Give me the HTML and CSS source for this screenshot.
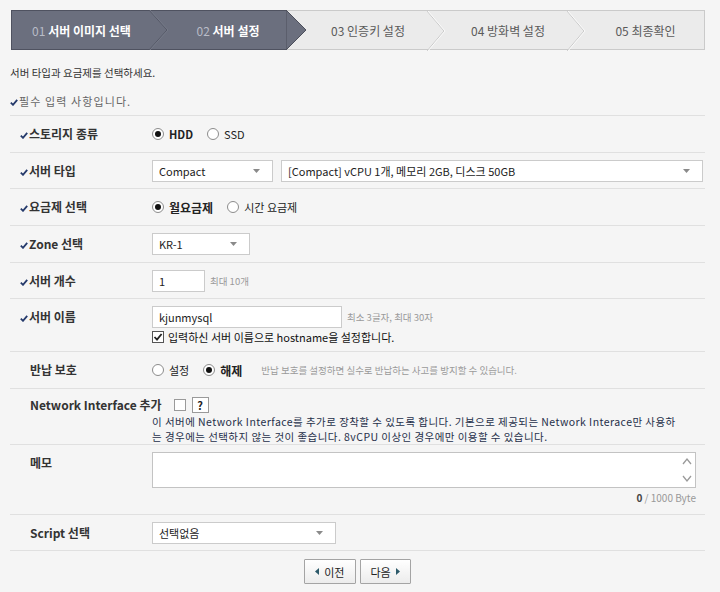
FILE: index.html
```html
<!DOCTYPE html>
<html>
<head>
<meta charset="utf-8">
<meta name="viewport" content="width=device-width, initial-scale=1">
<link rel="stylesheet" href="styles.css">
</head>
<body>
<div id="wizard">

<div class="steps">
  <div class="step step1 done">
    <span class="num">01</span>&nbsp;서버 이미지 선택
    <svg class="sep" width="20" height="40" viewBox="0 0 20 40"><polyline points="0,0 18,20 0,40" fill="none" stroke="#545866" stroke-width="1"/><polyline points="1,0 19,20 1,40" fill="none" stroke="#767a88" stroke-width="1"/></svg>
  </div>
  <div class="step step2 done">
    <span class="num">02</span>&nbsp;서버 설정
    <svg class="sep" width="21" height="40" viewBox="0 0 21 40"><polygon points="0,0 20,20 0,40" fill="#6b6f7e" stroke="#4c4f5b" stroke-width="1"/></svg>
  </div>
  <div class="step step3">
    03 인증키 설정
    <svg class="sep" width="20" height="40" viewBox="0 0 20 40"><polyline points="0,0 17,20 0,40" fill="none" stroke="#c9c9c9" stroke-width="1"/><polyline points="1,0 18,20 1,40" fill="none" stroke="#fafafa" stroke-width="1"/></svg>
  </div>
  <div class="step step4">
    04 방화벽 설정
    <svg class="sep" width="20" height="40" viewBox="0 0 20 40"><polyline points="0,0 17,20 0,40" fill="none" stroke="#c9c9c9" stroke-width="1"/><polyline points="1,0 18,20 1,40" fill="none" stroke="#fafafa" stroke-width="1"/></svg>
  </div>
  <div class="step step5">
    05 최종확인
  </div>
</div>

<p class="intro">서버 타입과 요금제를 선택하세요.</p>
<p class="note"><svg class="chk" width="8" height="7" viewBox="0 0 8 7"><polyline points="0.8,3.6 3,5.8 7.2,0.8" fill="none" stroke="#253a6b" stroke-width="1.8"/></svg>필수 입력 사항입니다.</p>

<div class="form">

  <div class="row">
    <div class="label req"><svg class="chk" width="8" height="7" viewBox="0 0 8 7"><polyline points="0.8,3.6 3,5.8 7.2,0.8" fill="none" stroke="#253a6b" stroke-width="1.8"/></svg>스토리지 종류</div>
    <div class="value">
      <span class="opt"><span class="radio on"></span><b>HDD</b></span>
      <span class="opt"><span class="radio"></span>SSD</span>
    </div>
  </div>

  <div class="row tight">
    <div class="label req"><svg class="chk" width="8" height="7" viewBox="0 0 8 7"><polyline points="0.8,3.6 3,5.8 7.2,0.8" fill="none" stroke="#253a6b" stroke-width="1.8"/></svg>서버 타입</div>
    <div class="value">
      <div class="select w-compact">Compact<svg class="arr" width="7" height="4" viewBox="0 0 7 4"><polygon points="0,0 7,0 3.5,4" fill="#8a8a8a"/></svg></div>
      <div class="select w-spec">[Compact] vCPU 1개, 메모리 2GB, 디스크 50GB<svg class="arr" width="7" height="4" viewBox="0 0 7 4"><polygon points="0,0 7,0 3.5,4" fill="#8a8a8a"/></svg></div>
    </div>
  </div>

  <div class="row">
    <div class="label req"><svg class="chk" width="8" height="7" viewBox="0 0 8 7"><polyline points="0.8,3.6 3,5.8 7.2,0.8" fill="none" stroke="#253a6b" stroke-width="1.8"/></svg>요금제 선택</div>
    <div class="value">
      <span class="opt"><span class="radio on"></span><b class="big">월요금제</b></span>
      <span class="opt"><span class="radio"></span>시간 요금제</span>
    </div>
  </div>

  <div class="row">
    <div class="label req"><svg class="chk" width="8" height="7" viewBox="0 0 8 7"><polyline points="0.8,3.6 3,5.8 7.2,0.8" fill="none" stroke="#253a6b" stroke-width="1.8"/></svg>Zone 선택</div>
    <div class="value">
      <div class="select w-zone">KR-1<svg class="arr" width="7" height="4" viewBox="0 0 7 4"><polygon points="0,0 7,0 3.5,4" fill="#8a8a8a"/></svg></div>
    </div>
  </div>

  <div class="row tight">
    <div class="label req"><svg class="chk" width="8" height="7" viewBox="0 0 8 7"><polyline points="0.8,3.6 3,5.8 7.2,0.8" fill="none" stroke="#253a6b" stroke-width="1.8"/></svg>서버 개수</div>
    <div class="value">
      <div class="input w-count">1</div>
      <span class="hint">최대 10개</span>
    </div>
  </div>

  <div class="row name">
    <div class="label req"><svg class="chk" width="8" height="7" viewBox="0 0 8 7"><polyline points="0.8,3.6 3,5.8 7.2,0.8" fill="none" stroke="#253a6b" stroke-width="1.8"/></svg>서버 이름</div>
    <div class="value stack">
      <div class="line">
        <div class="input w-name">kjunmysql</div>
        <span class="hint">최소 3글자, 최대 30자</span>
      </div>
      <div class="check-line">
        <span class="checkbox on"><svg width="10" height="10" viewBox="0 0 10 10"><polyline points="1.5,5 4,7.6 8.6,2" fill="none" stroke="#222" stroke-width="1.8"/></svg></span>
        입력하신 서버 이름으로 hostname을 설정합니다.
      </div>
    </div>
  </div>

  <div class="row">
    <div class="label">반납 보호</div>
    <div class="value">
      <span class="opt"><span class="radio"></span>설정</span>
      <span class="opt"><span class="radio on"></span><b class="big">해제</b></span>
      <span class="hint">반납 보호를 설정하면 실수로 반납하는 사고를 방지할 수 있습니다.</span>
    </div>
  </div>

  <div class="row ni">
    <div class="ni-head">
      <span class="label">Network Interface 추가</span>
      <span class="checkbox"></span>
      <span class="help">?</span>
    </div>
    <div class="ni-desc">
      <div>이 서버에 Network Interface를 추가로 장착할 수 있도록 합니다. 기본으로 제공되는 Network Interace만 사용하</div>
      <div>는 경우에는 선택하지 않는 것이 좋습니다. 8vCPU 이상인 경우에만 이용할 수 있습니다.</div>
    </div>
  </div>

  <div class="row memo">
    <div class="label">메모</div>
    <div class="value stack">
      <div class="textarea">
        <svg class="scroll" width="10" height="26" viewBox="0 0 10 26"><polyline points="1,7 5,2 9,7" fill="none" stroke="#9a9a9a" stroke-width="1.3"/><polyline points="1,19 5,24 9,19" fill="none" stroke="#9a9a9a" stroke-width="1.3"/></svg>
      </div>
      <div class="bytes"><b>0</b> / 1000 Byte</div>
    </div>
  </div>

  <div class="row tight last">
    <div class="label">Script 선택</div>
    <div class="value">
      <div class="select w-script">선택없음<svg class="arr" width="7" height="4" viewBox="0 0 7 4"><polygon points="0,0 7,0 3.5,4" fill="#8a8a8a"/></svg></div>
    </div>
  </div>

</div>

<div class="buttons">
  <button class="btn"><svg width="4" height="7" viewBox="0 0 4 7"><polygon points="4,0 4,7 0,3.5" fill="#2d5a6a"/></svg>이전</button>
  <button class="btn">다음<svg width="4" height="7" viewBox="0 0 4 7"><polygon points="0,0 0,7 4,3.5" fill="#2d5a6a"/></svg></button>
</div>

</div>
</body>
</html>
```

FILE: styles.css
```css
body {
  margin: 0;
  background-color: #f5f5f5;
  font-family: "Noto Sans CJK KR", "Noto Sans", sans-serif;
  font-size: 11px;
  color: #333;
}

#wizard {
  padding: 10px 15px 0 10px;
}

/* step bar */
.steps {
  display: flex;
  height: 40px;
  margin-left: 1px;
  box-sizing: border-box;
  border: 1px solid #cacaca;
  background-color: #ebebeb;
}

.step {
  position: relative;
  display: flex;
  align-items: center;
  justify-content: center;
  box-sizing: border-box;
  font-size: 12px;
  color: #5a5a5a;
}

.step1 { width: 140px; }
.step2 { width: 136px; padding-left: 18px; }
.step3 { width: 142px; padding-left: 20px; }
.step4 { width: 140px; padding-left: 18px; }
.step5 { flex: 1; padding-left: 18px; }

.step.done {
  background-color: #6b6f7e;
  color: #fff;
  font-weight: bold;
  margin: -1px 0;
  border-top: 1px solid #4f5260;
  border-bottom: 1px solid #4f5260;
}

.step1.done {
  margin-left: -1px;
  border-left: 1px solid #4f5260;
}

.step .num {
  color: #b9bcc7;
  font-weight: normal;
}

.step .sep {
  position: absolute;
  top: 0;
  right: -18px;
  z-index: 1;
}

.step.done .sep {
  top: -1px;
  height: 40px;
}

.step2 .sep {
  right: -20px;
}

/* texts above the form */
.intro {
  margin: 15px 0 0;
  line-height: 16px;
  font-size: 10.5px;
  color: #333;
}

.note {
  margin: 12px 0 0;
  line-height: 16px;
  color: #666;
  letter-spacing: 1.1px;
}

.chk {
  margin-right: 1px;
  vertical-align: 0;
}

/* form rows */
.form {
  margin-top: 6px;
}

.row {
  display: flex;
  border-top: 1px solid #e0e0e0;
  padding: 7px 0;
}

.row.tight {
  padding-bottom: 6px;
}

.row.last {
  border-bottom: 1px solid #e0e0e0;
}

.label {
  width: 142px;
  flex-shrink: 0;
  box-sizing: border-box;
  padding-left: 20px;
  line-height: 22px;
  font-size: 12px;
  font-weight: bold;
  color: #333;
  white-space: nowrap;
}

.label.req {
  padding-left: 10px;
}

.value {
  display: flex;
  align-items: center;
  min-height: 22px;
}

.value.stack {
  flex-direction: column;
  align-items: stretch;
  flex: 1;
}

.line {
  display: flex;
  align-items: center;
}

/* radios */
.opt {
  display: inline-flex;
  align-items: center;
  margin-right: 14px;
  color: #222;
}

.opt b {
  font-size: 11px;
}

.opt b.big {
  font-size: 12px;
}

.radio {
  width: 12px;
  height: 12px;
  box-sizing: border-box;
  border: 1px solid #8c8c8c;
  border-radius: 50%;
  background-color: #fff;
  margin-right: 5px;
  display: flex;
  align-items: center;
  justify-content: center;
}

.radio.on::before {
  content: "";
  width: 6px;
  height: 6px;
  border-radius: 50%;
  background-color: #111;
}

/* selects and inputs */
.select, .input {
  display: flex;
  align-items: center;
  height: 22px;
  box-sizing: border-box;
  border: 1px solid #cbcbcb;
  background-color: #fff;
  padding: 0 6px;
  color: #222;
}

.select {
  justify-content: space-between;
  padding-right: 12px;
}

.w-compact { width: 121px; margin-right: 8px; }
.w-spec { width: 422px; }
.w-zone { width: 98px; }
.w-count { width: 53px; }
.w-name { width: 190px; }
.w-script { width: 184px; }

.hint {
  margin-left: 5px;
  font-size: 9.5px;
  color: #9a9a9a;
  white-space: nowrap;
}

.row.name {
  padding-bottom: 6px;
}

.check-line {
  display: flex;
  align-items: center;
  margin-top: 1px;
  line-height: 16px;
  color: #111;
}

.checkbox {
  display: inline-flex;
  align-items: center;
  justify-content: center;
  width: 12px;
  height: 12px;
  box-sizing: border-box;
  border: 1px solid #9a9a9a;
  background-color: #fff;
}

.checkbox.on {
  border-color: #555;
  margin-right: 4px;
}

/* network interface row */
.row.ni {
  display: block;
  padding: 6px 0 0;
}

.ni-head {
  display: flex;
  align-items: center;
  height: 19px;
}

.ni-head .label {
  width: auto;
  margin-right: 12px;
}

.help {
  display: inline-flex;
  align-items: center;
  justify-content: center;
  width: 17px;
  height: 16px;
  box-sizing: border-box;
  border: 1px solid #9a9a9a;
  background-color: #fff;
  margin-left: 6px;
  font-weight: bold;
  font-size: 11px;
  color: #222;
}

.ni-desc {
  margin-left: 142px;
  line-height: 15px;
  font-size: 10.5px;
  color: #26304a;
  white-space: nowrap;
  letter-spacing: 0.45px;
}

/* memo */
.row.memo {
  padding-bottom: 8px;
}

.textarea {
  position: relative;
  height: 36px;
  width: 544px;
  box-sizing: border-box;
  border: 1px solid #c3c3c3;
  background-color: #fff;
}

.textarea .scroll {
  position: absolute;
  right: 3px;
  top: 4px;
}

.bytes {
  width: 544px;
  margin-top: 2px;
  line-height: 16px;
  text-align: right;
  font-size: 10px;
  color: #999;
}

.bytes b {
  color: #444;
}

/* buttons */
.buttons {
  display: flex;
  justify-content: center;
  gap: 4px;
  margin-top: 8px;
}

.btn {
  display: flex;
  align-items: center;
  gap: 5px;
  height: 25px;
  padding: 0 10px;
  border: 1px solid #a4a4a4;
  border-radius: 1px;
  background: linear-gradient(#ffffff, #ececec);
  font-family: inherit;
  font-size: 11px;
  color: #222;
}
```
